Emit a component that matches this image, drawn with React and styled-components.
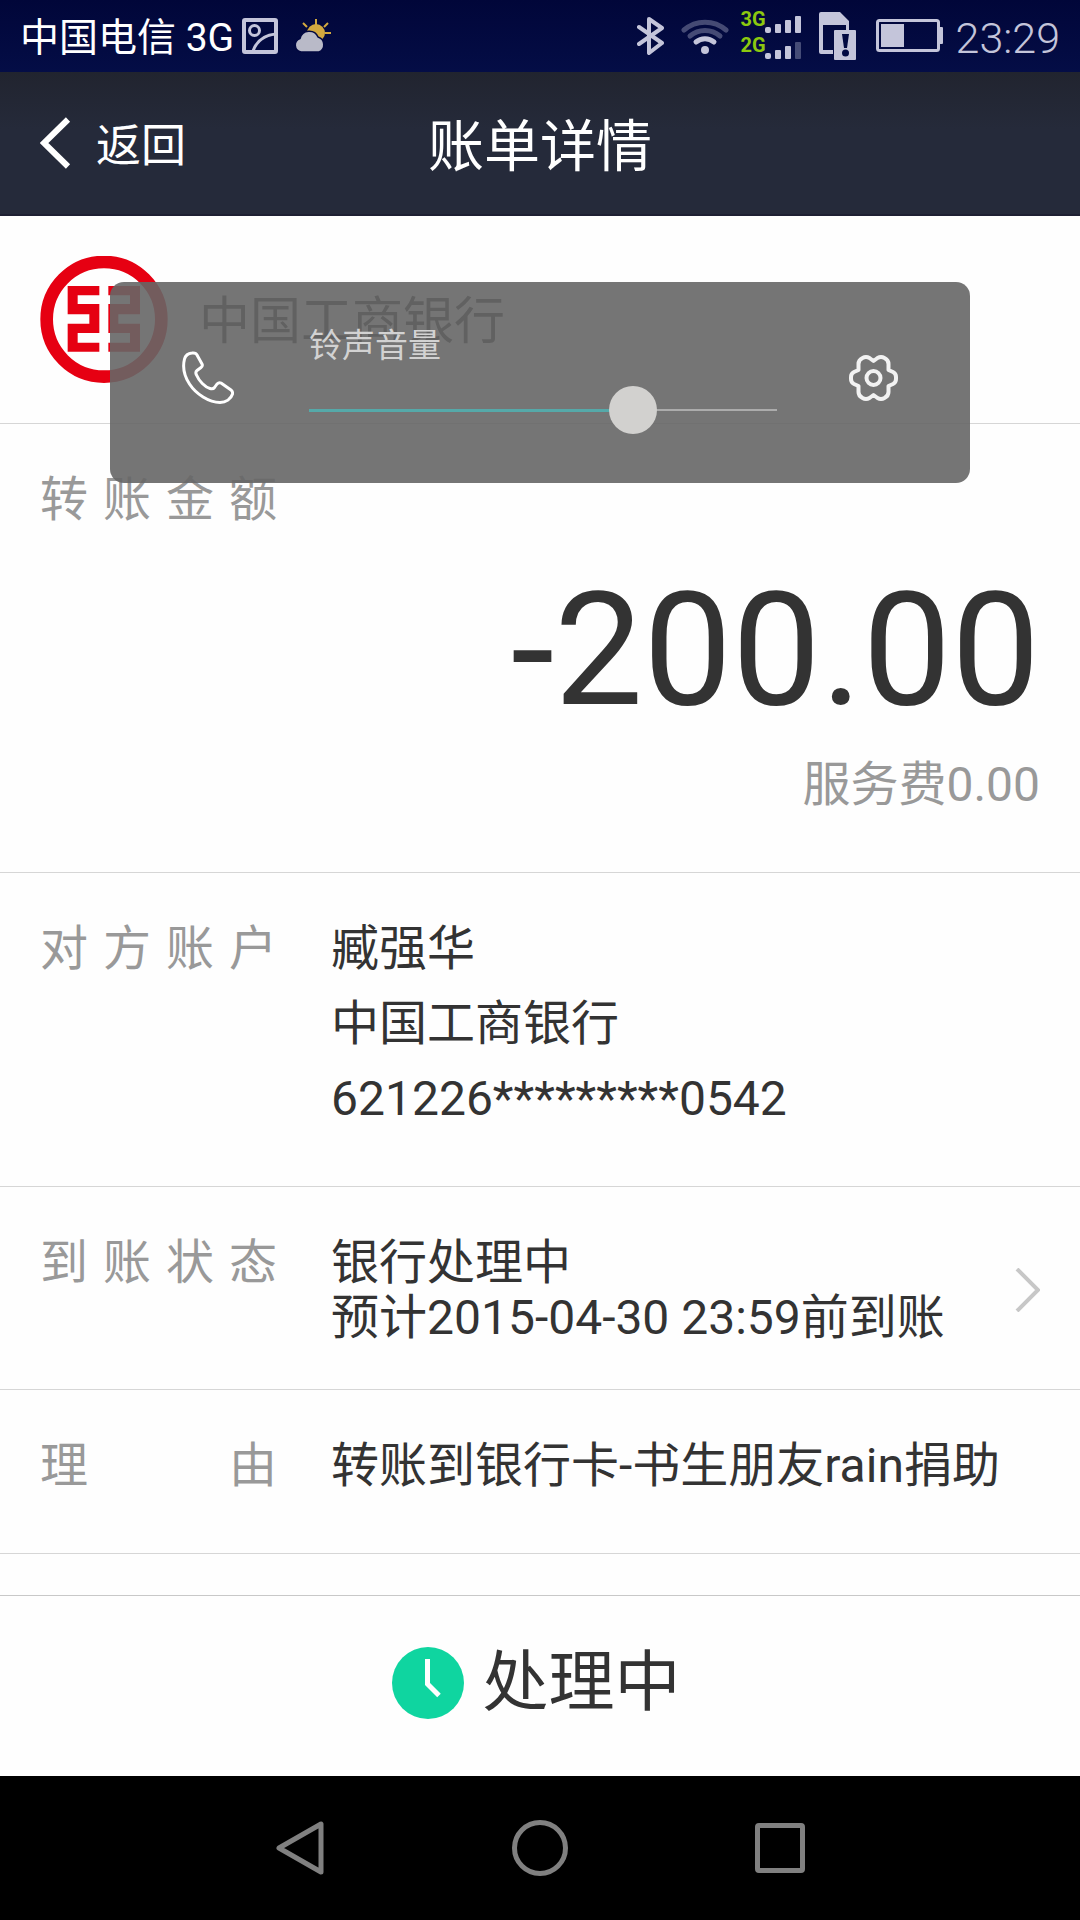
import React, { useState } from 'react';
import styled, { createGlobalStyle } from 'styled-components';

const GlobalStyle = createGlobalStyle`
  * {
    box-sizing: border-box;
  }

  body {
    margin: 0;
    background: #fefefe;
    color: #333;
    font-family: Roboto, 'Noto Sans CJK SC', sans-serif;
  }

  h1, p, dl, dd {
    margin: 0;
  }

  svg {
    display: block;
    flex: none;
  }

  button {
    border: 0;
    padding: 0;
    background: none;
    color: inherit;
    font: inherit;
    cursor: pointer;
  }
`;

const Screen = styled.div`
  position: relative;
  display: flex;
  flex-direction: column;
  min-height: 100vh;
`;

const StatusBar = styled.div`
  display: flex;
  justify-content: space-between;
  height: 72px;
  padding: 0 20px;
  background: linear-gradient(#010639, #040d46);
  color: #c4c5da;
`;

const StatusGroup = styled.div`
  display: flex;
  align-items: center;
  gap: ${({ $gap }) => $gap}px;
`;

const Carrier = styled.span`
  padding-top: 4px;
  color: #fff;
  font-size: 39px;
  line-height: 68px;
`;

const Clock = styled.time`
  padding-top: 4px;
  font-size: 43px;
  font-weight: 300;
  line-height: 68px;
`;

const Signals = styled.div`
  width: 66px;
  height: 52px;
  margin-bottom: 4px;
`;

const Signal = styled.div`
  display: flex;
  align-items: flex-end;
  height: 26px;
`;

const SignalType = styled.span`
  width: 24px;
  color: #8cc80f;
  font-size: 20px;
  font-weight: 700;
  line-height: 30px;
`;

const Header = styled.header`
  display: grid;
  grid-template-columns: 1fr auto 1fr;
  align-items: center;
  height: 144px;
  padding: 0 40px;
  background: linear-gradient(#21242f, #252a3a 40%);
  border-bottom: 2px solid #1e2033;
  color: #fff;
`;

const BackButton = styled.button`
  display: flex;
  align-items: center;
  justify-self: start;
  gap: 24px;
  font-size: 45px;
  line-height: 60px;
`;

const BackLabel = styled.span`
  padding-top: 8px;
`;

const Title = styled.h1`
  padding-top: 8px;
  font-size: 56px;
  font-weight: 400;
  line-height: 76px;
`;

const Bank = styled.section`
  display: flex;
  align-items: center;
  gap: 31px;
  height: 208px;
  padding: 0 40px;
  border-bottom: 1px solid #d6d6d6;
`;

const BankName = styled.span`
  padding-top: 4px;
  font-size: 51px;
  line-height: 76px;
`;

const Details = styled.dl`
  flex: 1;
  font-size: 48px;
`;

const Row = styled.div`
  display: flex;
  padding: 38px 40px ${({ $bottom = 50 }) => $bottom}px;
  border-bottom: 1px solid #d6d6d6;
`;

const AmountRow = styled(Row)`
  flex-direction: column;
`;

const Label = styled.dt`
  flex: none;
  width: 237px;
  margin-right: 54px;
  color: #999;
  line-height: 75px;
  text-align: justify;
  text-align-last: justify;
`;

const Value = styled.dd`
  flex: 1;
  line-height: 75px;
`;

const StatusLink = styled.a`
  display: flex;
  align-items: center;
  justify-content: space-between;
  margin-top: 10px;
  color: inherit;
  line-height: 55px;
  text-decoration: none;
`;

const Amount = styled.dd`
  margin-top: 33px;
  font-size: 158px;
  line-height: 160px;
  text-align: right;
`;

const Fee = styled.dd`
  margin-top: 17px;
  color: #999;
  line-height: 75px;
  text-align: right;
`;

const Progress = styled.footer`
  display: flex;
  align-items: center;
  justify-content: center;
  gap: 19px;
  height: 181px;
  padding: 0 8px 6px 0;
  border-top: 1px solid #c8c8c8;
  font-size: 66px;
  line-height: 88px;
`;

const NavBar = styled.nav`
  display: flex;
  align-items: center;
  justify-content: center;
  gap: 180px;
  height: 144px;
  background: #000;
`;

const VolumePanel = styled.div`
  position: absolute;
  top: 282px;
  left: 110px;
  right: 110px;
  display: flex;
  align-items: center;
  height: 201px;
  padding: 0 72px 10px;
  border-radius: 14px;
  background: rgba(102, 102, 102, 0.9);
`;

const VolumeControl = styled.div`
  display: flex;
  flex: 1;
  flex-direction: column;
  gap: 24px;
  margin: 0 72px 0 75px;
  padding-top: 8px;
`;

const VolumeLabel = styled.label`
  color: #d2d2d2;
  font-size: 33px;
  line-height: 33px;
`;

const VolumeSlider = styled.input`
  appearance: none;
  width: 100%;
  height: 48px;
  margin: 0;
  background:
    linear-gradient(#55a9a9, #55a9a9) left center / ${({ $filled }) => $filled}% 3px no-repeat,
    linear-gradient(#acacac, #acacac) left center / 100% 2px no-repeat;

  &::-webkit-slider-thumb {
    appearance: none;
    width: 48px;
    height: 48px;
    border-radius: 50%;
    background: #d2d1cf;
  }
`;

const SignalBars = ({ weak }) => (
  <svg width="36" height="18" viewBox="0 0 36 18" fill="currentColor">
    <rect x="0" y="11" width="6" height="6" rx="2" />
    <rect x="10" y="8" width="6" height="9" rx="1" />
    <rect x="20" y="4" width="6" height="13" rx="1" />
    <rect x="30" y="0" width="6" height="17" rx="1" opacity={weak ? 0.35 : 1} />
  </svg>
);

const PictureIcon = () => (
  <svg width="36" height="36" viewBox="0 0 36 36" fill="none" stroke="#c4c5da" strokeWidth="3">
    <rect x="2" y="2" width="32" height="32" rx="1" strokeWidth="4" />
    <circle cx="12.5" cy="12.5" r="5" />
    <path d="M11 33C15 22 22 17 34 16" />
  </svg>
);

const WeatherIcon = () => (
  <svg width="50" height="36" viewBox="-8 0 50 36">
    <g stroke="#d3a93f" strokeWidth="2">
      <path d="M22 7V1M13 9l-4-4M30 9l4-4M31 15h6" />
      <circle cx="22" cy="15" r="9" fill="#d3a93f" stroke="none" />
    </g>
    <path
      d="M7 34a7 7 0 0 1-1-13.5A9.5 9.5 0 0 1 24 19a8 8 0 0 1 1 15z"
      fill="#b9bac8"
      stroke="#020840"
      strokeWidth="1.5"
    />
  </svg>
);

const BluetoothIcon = () => (
  <svg width="32" height="40" viewBox="0 0 32 40" fill="none" stroke="currentColor" strokeWidth="4" strokeLinejoin="round" strokeLinecap="round">
    <path d="M2 11L25 27L12 37V3L25 12L2 28" />
  </svg>
);

const WifiIcon = () => (
  <svg width="48" height="38" viewBox="0 0 48 38" fill="none" stroke="currentColor" strokeWidth="5" strokeLinecap="round">
    <path d="M3 13A32 32 0 0 1 45 13" opacity="0.35" />
    <path d="M9 19A23 23 0 0 1 39 19" opacity="0.35" />
    <path d="M15 25A14 14 0 0 1 33 25" />
    <circle cx="24" cy="33" r="4" fill="currentColor" stroke="none" />
  </svg>
);

const SimIcon = () => (
  <svg width="45" height="48" viewBox="0 0 45 48">
    <path
      d="M2 0H21L30 9V18H27V13H4V38H14V42H2Q0 42 0 40V2Q0 0 2 0z"
      fill="currentColor"
    />
    <rect x="15" y="18" width="22" height="30" rx="1" fill="currentColor" />
    <path d="M23 22H30L28 36H25z" fill="#020a42" />
    <circle cx="26.5" cy="41" r="3.5" fill="#020a42" />
  </svg>
);

const BatteryIcon = () => (
  <svg width="68" height="34" viewBox="0 0 68 34" fill="currentColor">
    <rect x="1.5" y="1.5" width="61" height="30" rx="2" fill="none" stroke="currentColor" strokeWidth="3" />
    <rect x="5" y="5" width="23" height="23" />
    <rect x="63" y="8" width="4" height="17" rx="1" />
  </svg>
);

const BackChevron = () => (
  <svg width="32" height="52" viewBox="0 0 32 52" fill="none" stroke="#fff" strokeWidth="6">
    <path d="M28 2.5L4 26L28 49.5" />
  </svg>
);

const BankLogo = () => (
  <svg width="128" height="128" viewBox="12 18 384 384" fill="#e60012">
    <circle cx="204" cy="208" r="172" fill="none" stroke="#e60012" strokeWidth="38" />
    <path d="M95 108H190V136H125V162H190V249H125V278H190V305H95V221H160V193H95z" />
    <path d="M312 108H217V136H282V162H217V249H282V278H217V305H312V221H247V193H312z" />
  </svg>
);

const RowChevron = () => (
  <svg width="25" height="44" viewBox="0 0 25 44" fill="none" stroke="#c7c7c7" strokeWidth="4">
    <path d="M2 1L23 22L2 43" />
  </svg>
);

const PendingIcon = () => (
  <svg width="72" height="72" viewBox="0 0 72 72">
    <circle cx="36" cy="36" r="36" fill="#0fd5a0" />
    <path d="M35.5 12V37L47 48.5" fill="none" stroke="#fff" strokeWidth="5" />
  </svg>
);

const PhoneIcon = () => (
  <svg width="52" height="53" viewBox="0 0 52 53" fill="none" stroke="#fff" strokeWidth="3" strokeLinejoin="round">
    <path d="M10 2Q14 1.500 15 4L20 13Q21 15 19 16.500L15 19.500Q13 21 14.500 24C17 30 23 36 28 37.500Q31 38.500 32.500 36.500L35 33Q37 31 39 32L49 39Q51 40.500 50.500 43C49 48 44 51.500 38 51.500C27 51.500 14 43 7.500 33C1 23 1 14 2.500 8Q4 2.500 10 2z" />
  </svg>
);

const GearIcon = () => (
  <svg width="49" height="50" viewBox="-24.5 -25 49 50" fill="none" stroke="#f2f2f2" strokeWidth="4" strokeLinejoin="round">
    <path d="M0 -17L4 -20Q7.5 -22 11 -20Q15 -18 15 -14L15 -8L19.5 -6Q22.5 -4.5 22.5 -1V1Q22.5 4.5 19.5 6L15 8L15 14Q15 18 11 20Q7.5 22 4 20L0 17L-4 20Q-7.5 22 -11 20Q-15 18 -15 14L-15 8L-19.5 6Q-22.5 4.5 -22.5 1V-1Q-22.5 -4.5 -19.5 -6L-15 -8L-15 -14Q-15 -18 -11 -20Q-7.5 -22 -4 -20z" />
    <circle r="7" />
  </svg>
);

const NavIcon = ({ children }) => (
  <svg width="60" height="60" viewBox="0 0 60 60" fill="none" stroke="#808080" strokeWidth="5" strokeLinejoin="round">
    {children}
  </svg>
);

const MAX_VOLUME = 7;

const App = () => {
  const [volume, setVolume] = useState(5);

  return (
    <>
      <GlobalStyle />
      <Screen>
        <StatusBar>
          <StatusGroup $gap={8}>
            <Carrier>中国电信 3G</Carrier>
            <PictureIcon />
            <WeatherIcon />
          </StatusGroup>
          <StatusGroup $gap={12}>
            <BluetoothIcon />
            <WifiIcon />
            <Signals>
              <Signal>
                <SignalType>3G</SignalType>
                <SignalBars />
              </Signal>
              <Signal>
                <SignalType>2G</SignalType>
                <SignalBars weak />
              </Signal>
            </Signals>
            <SimIcon />
            <BatteryIcon />
            <Clock>23:29</Clock>
          </StatusGroup>
        </StatusBar>

        <Header>
          <BackButton type="button">
            <BackChevron />
            <BackLabel>返回</BackLabel>
          </BackButton>
          <Title>账单详情</Title>
        </Header>

        <Bank>
          <BankLogo />
          <BankName>中国工商银行</BankName>
        </Bank>

        <Details>
          <AmountRow>
            <Label>转账金额</Label>
            <Amount>-200.00</Amount>
            <Fee>服务费0.00</Fee>
          </AmountRow>
          <Row>
            <Label>对方账户</Label>
            <Value>
              <p>臧强华</p>
              <p>中国工商银行</p>
              <p>621226*********0542</p>
            </Value>
          </Row>
          <Row $bottom={44}>
            <Label>到账状态</Label>
            <Value>
              <StatusLink href="#status">
                <span>
                  银行处理中
                  <br />
                  预计2015-04-30 23:59前到账
                </span>
                <RowChevron />
              </StatusLink>
            </Value>
          </Row>
          <Row>
            <Label>理由</Label>
            <Value>转账到银行卡-书生朋友rain捐助</Value>
          </Row>
        </Details>

        <Progress>
          <PendingIcon />
          处理中
        </Progress>

        <NavBar>
          <button type="button" aria-label="返回">
            <NavIcon>
              <path d="M51 6V54L9 30z" />
            </NavIcon>
          </button>
          <button type="button" aria-label="主屏幕">
            <NavIcon>
              <circle cx="30" cy="30" r="25.5" />
            </NavIcon>
          </button>
          <button type="button" aria-label="最近任务">
            <NavIcon>
              <rect x="7.5" y="7.5" width="45" height="45" rx="1.5" />
            </NavIcon>
          </button>
        </NavBar>

        <VolumePanel>
          <PhoneIcon />
          <VolumeControl>
            <VolumeLabel htmlFor="ring-volume">铃声音量</VolumeLabel>
            <VolumeSlider
              id="ring-volume"
              type="range"
              min="0"
              max={MAX_VOLUME}
              value={volume}
              $filled={(volume / MAX_VOLUME) * 100}
              onChange={(e) => setVolume(Number(e.target.value))}
            />
          </VolumeControl>
          <button type="button" aria-label="设置">
            <GearIcon />
          </button>
        </VolumePanel>
      </Screen>
    </>
  );
};

export default App;
